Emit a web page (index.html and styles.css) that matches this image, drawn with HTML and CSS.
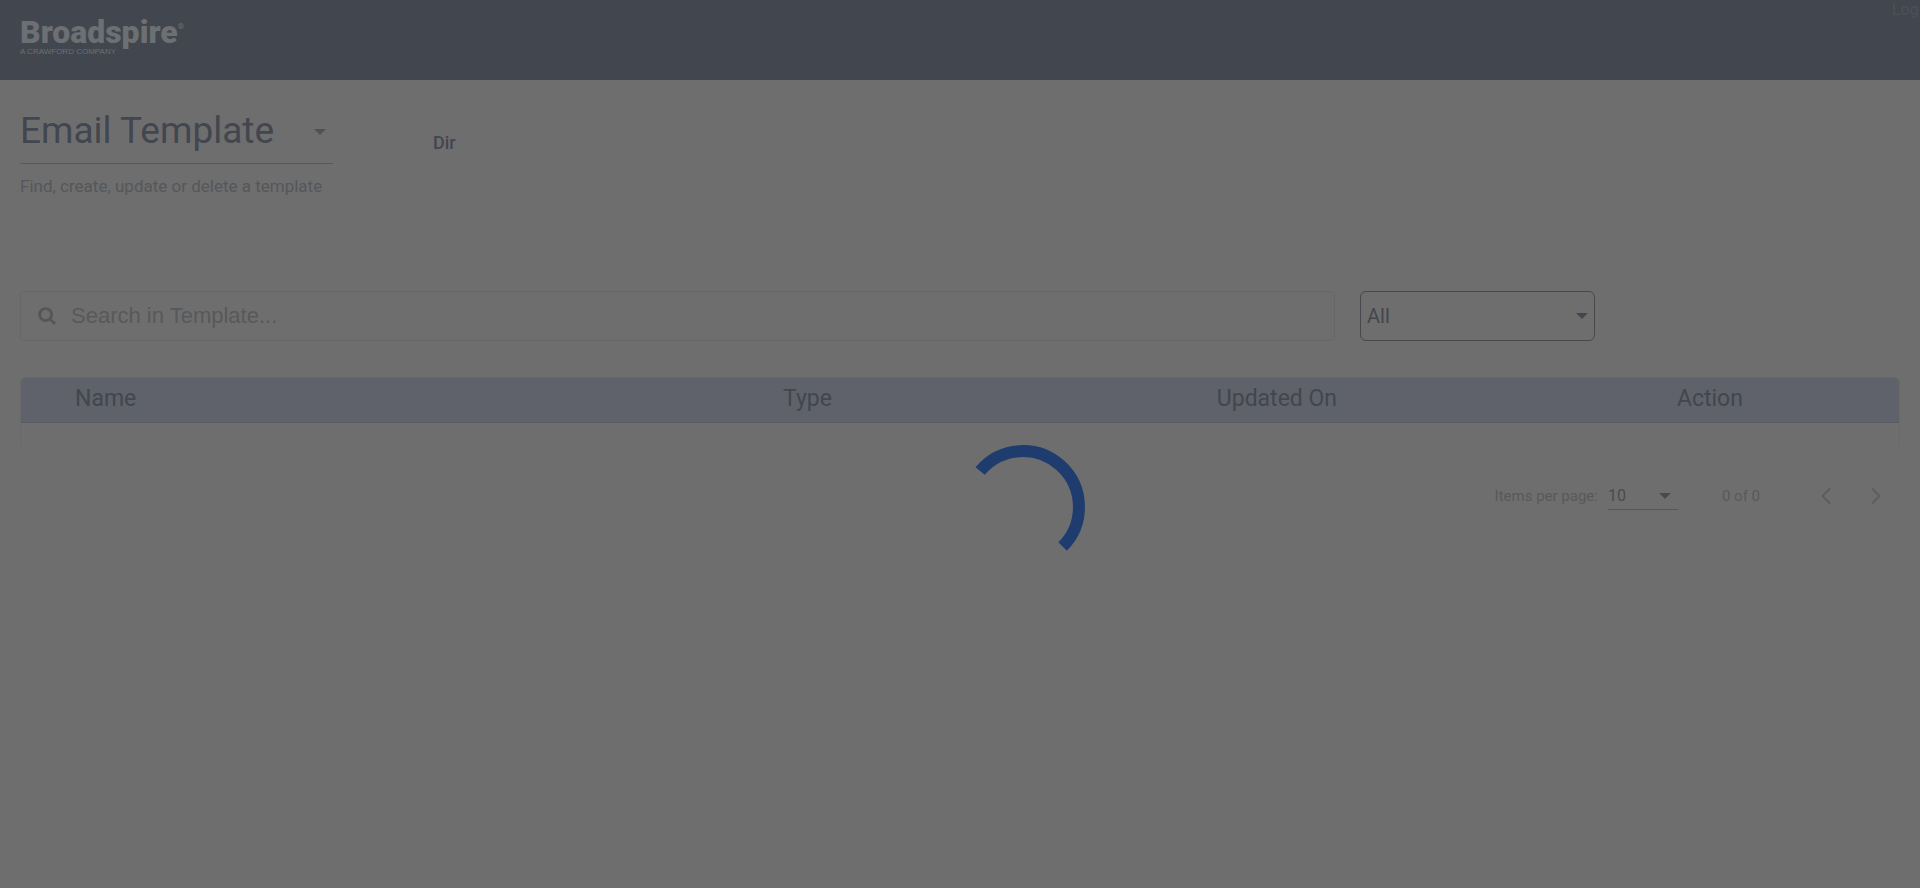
FILE: index.html
```html
<!DOCTYPE html>
<html lang="en">
<head>
<meta charset="utf-8">
<title>Email Template</title>
<meta name="viewport" content="width=device-width, initial-scale=1">
<link rel="stylesheet" href="styles.css">
</head>
<body>
<header class="topbar">
  <div class="logo">
    <span class="logo-name">Broadspire<sup class="logo-mark">®</sup></span>
    <span class="logo-tag">A CRAWFORD COMPANY</span>
  </div>
  <a class="log-link" href="#">Log</a>
</header>
<main class="page">
  <section class="heading">
    <div class="heading-main">
      <div class="select-wrap title-wrap">
        <select class="title-select" aria-label="Section"><option>Email Template</option></select>
        <svg class="arrow" viewBox="0 0 12 6" aria-hidden="true"><path d="M0 0h12L6 6z"/></svg>
      </div>
      <p class="subtitle">Find, create, update or delete a template</p>
    </div>
    <span class="dir">Dir</span>
  </section>
  <section class="filters">
    <label class="search">
      <svg class="search-icon" viewBox="0 0 20 20" aria-hidden="true"><circle cx="8" cy="8" r="6.3"/><path d="M12.6 12.6l5.4 5.4"/></svg>
      <input class="search-input" type="text" placeholder="Search in Template..." aria-label="Search in Template">
    </label>
    <div class="select-wrap type-wrap">
      <select class="type-select" aria-label="Type filter"><option>All</option></select>
      <svg class="arrow" viewBox="0 0 12 6" aria-hidden="true"><path d="M0 0h12L6 6z"/></svg>
    </div>
  </section>
  <div class="table-box">
    <table class="templates">
      <thead>
        <tr><th class="col-name">Name</th><th class="col-type">Type</th><th class="col-updated">Updated On</th><th class="col-action">Action</th></tr>
      </thead>
    </table>
  </div>
  <nav class="paginator" aria-label="Pagination">
    <label class="per-page" for="size">Items per page:</label>
    <div class="select-wrap size-wrap">
      <select class="size-select" id="size"><option>10</option></select>
      <svg class="arrow" viewBox="0 0 12 6" aria-hidden="true"><path d="M0 0h12L6 6z"/></svg>
    </div>
    <span class="range">0 of 0</span>
    <button class="page-btn" type="button" aria-label="Previous page" disabled><svg class="chevron" viewBox="0 0 12 18"><path d="M10 1.5L2.5 9l7.500 7.500"/></svg></button>
    <button class="page-btn" type="button" aria-label="Next page" disabled><svg class="chevron" viewBox="0 0 12 18"><path d="M2 1.500L9.500 9 2 16.500"/></svg></button>
  </nav>
</main>
<svg class="spinner" viewBox="0 0 126 126" role="img" aria-label="Loading"><path d="M20.100 27A56 56 0 1 1 102.600 102.600"/></svg>
</body>
</html>
```
FILE: styles.css
```css
* {
  box-sizing: border-box;
}

body {
  margin: 0;
  min-height: 100vh;
  background: #6e6e6e;
  color: #42464e;
  font-family: Roboto, "Liberation Sans", sans-serif;
}

.topbar {
  display: flex;
  justify-content: space-between;
  align-items: flex-start;
  height: 80px;
  padding-left: 20px;
  background: #42464e;
}

.logo {
  display: flex;
  flex-direction: column;
  padding-top: 16px;
  color: #6c6f73;
}

.logo-name {
  font-size: 32px;
  font-weight: 900;
  line-height: 32px;
}

.logo-mark {
  font-size: 8px;
  line-height: 8px;
  vertical-align: 14px;
}

.logo-tag {
  font-family: "Liberation Sans", Arial, sans-serif;
  font-size: 8px;
  line-height: 8px;
}

.log-link {
  width: 28px;
  overflow: hidden;
  color: #4d5058;
  font-size: 16px;
  line-height: 20px;
  text-decoration: none;
}

.page {
  padding: 20px 20px 0;
}

.heading {
  display: flex;
  gap: 100px;
  height: 191px;
}

.heading-main {
  flex: none;
}

.select-wrap {
  position: relative;
}

.select-wrap select {
  width: 100%;
  margin: 0;
  appearance: none;
  background: transparent;
  border: 0;
  outline: 0;
  color: inherit;
  font-family: inherit;
}

.arrow {
  position: absolute;
  top: 50%;
  right: 7px;
  width: 12px;
  height: 6px;
  margin-top: -3px;
  fill: currentColor;
  pointer-events: none;
}

.title-wrap {
  width: 313px;
  border-bottom: 1px solid #565a60;
}

.title-wrap .arrow {
  color: #505256;
}

.select-wrap .title-select {
  height: 63px;
  padding: 0 0 2px;
  font-size: 37px;
}

.subtitle {
  margin: 12px 0 0;
  color: #55575a;
  font-size: 17px;
  line-height: 20px;
}

.dir {
  padding-top: 32px;
  font-size: 18px;
  font-weight: 500;
  line-height: 22px;
}

.filters {
  display: grid;
  grid-template-columns: 1fr 235px 280px;
  column-gap: 25px;
  padding-right: 0;
}

.search {
  display: flex;
  align-items: center;
  gap: 14px;
  height: 50px;
  padding-left: 17px;
  border: 1px solid #676769;
  border-radius: 4px;
}

.search-icon {
  flex: none;
  width: 19px;
  height: 19px;
  fill: none;
  stroke: #55565a;
  stroke-width: 3;
}

.search-input {
  flex: 1;
  min-width: 0;
  padding: 0;
  background: transparent;
  border: 0;
  outline: 0;
  font-family: "Liberation Sans", Arial, sans-serif;
  font-size: 22px;
}

.search-input::placeholder {
  color: #57595b;
  opacity: 1;
}

.select-wrap .type-select {
  height: 50px;
  padding: 0 6px;
  border: 1px solid #46484c;
  border-radius: 6px;
  font-size: 20px;
}

.table-box {
  height: 70px;
  margin-top: 36px;
  border: 1px solid #696969;
  border-bottom: 0;
  border-radius: 6px 6px 0 0;
  overflow: hidden;
}

.templates {
  width: 100%;
  table-layout: fixed;
  border-collapse: collapse;
}

.templates th {
  height: 44px;
  padding: 0 0 3px 54px;
  background: #5f626a;
  border-bottom: 1px solid #595c64;
  font-size: 23px;
  font-weight: 400;
  text-align: left;
}

.col-name {
  width: 37.7%;
}

.col-type {
  width: 23.1%;
}

.col-updated {
  width: 24.5%;
}

.col-action {
  width: 14.7%;
}

.paginator {
  display: flex;
  align-items: center;
  justify-content: flex-end;
  height: 50px;
  margin-top: 24px;
  padding-right: 4px;
  color: #58595b;
  font-size: 15px;
}

.size-wrap {
  width: 70px;
  margin-left: 10px;
  border-bottom: 1px solid #55575a;
  color: #484a4f;
}

.select-wrap .size-select {
  height: 27px;
  padding: 0;
  font-size: 16px;
}

.range {
  margin: 0 46px 0 44px;
}

.page-btn {
  display: grid;
  place-items: center;
  width: 40px;
  height: 40px;
  margin-left: 10px;
  padding: 0;
  background: none;
  border: 0;
}

.range + .page-btn {
  margin-left: 0;
}

.chevron {
  width: 12px;
  height: 18px;
  fill: none;
  stroke: #5c5d5f;
  stroke-width: 2;
}

.spinner {
  position: fixed;
  top: 50%;
  left: 50%;
  width: 126px;
  height: 126px;
  fill: none;
  stroke: #1f3c6e;
  stroke-width: 12;
}
```
